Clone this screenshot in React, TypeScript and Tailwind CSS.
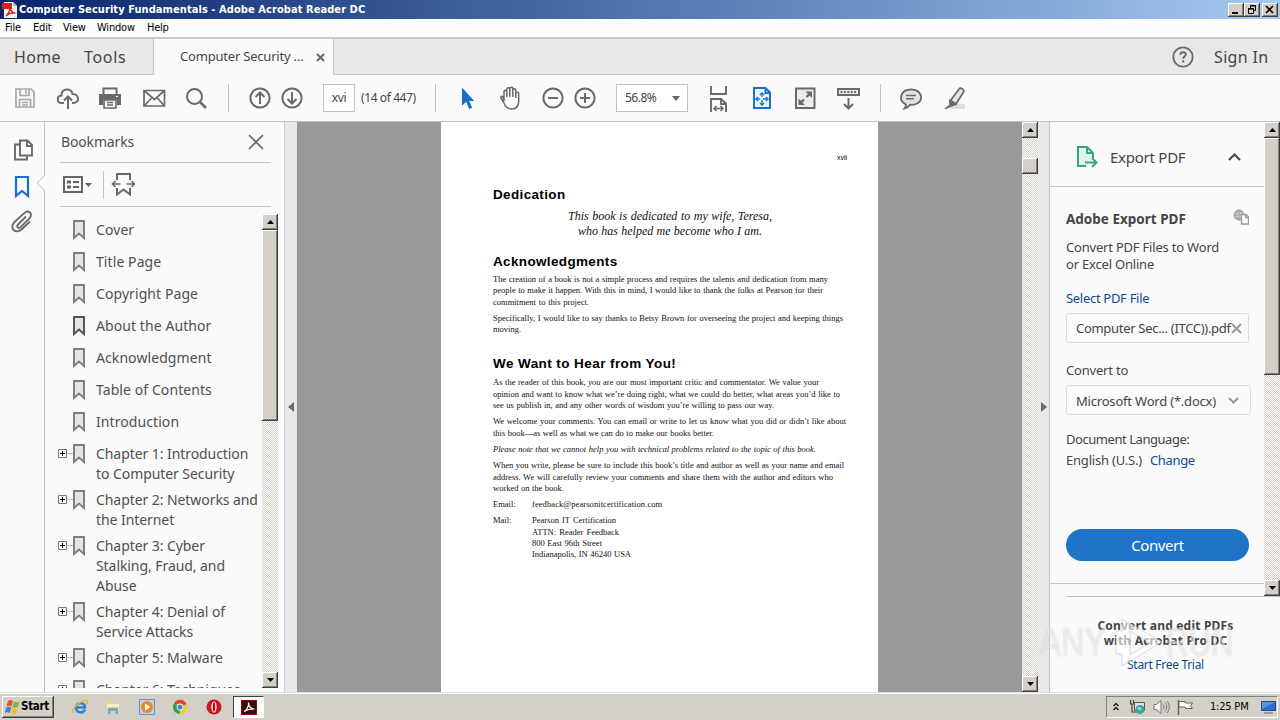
import type { ReactNode } from "react";

const bookmarks = [
  { lines: ["Cover"] },
  { lines: ["Title Page"] },
  { lines: ["Copyright Page"] },
  { lines: ["About the Author"], current: true },
  { lines: ["Acknowledgment"] },
  { lines: ["Table of Contents"] },
  { lines: ["Introduction"] },
  { lines: ["Chapter 1: Introduction", "to Computer Security"], expandable: true },
  { lines: ["Chapter 2: Networks and", "the Internet"], expandable: true },
  { lines: ["Chapter 3: Cyber", "Stalking, Fraud, and", "Abuse"], expandable: true },
  { lines: ["Chapter 4: Denial of", "Service Attacks"], expandable: true },
  { lines: ["Chapter 5: Malware"], expandable: true },
  { lines: ["Chapter 6: Techniques"], expandable: true },
];

const Icon = ({ className = "", children }: { className?: string; children: ReactNode }) => (
  <svg viewBox="0 0 24 24" className={`h-6 w-6 shrink-0 ${className}`} fill="none" stroke="#6a6a6a" strokeWidth="2">
    {children}
  </svg>
);

const Separator = ({ className = "" }: { className?: string }) => (
  <div className={`h-7 w-px shrink-0 bg-[#c4c4c4] ${className}`} />
);

const bevel =
  "bg-[#d4d0c8] shadow-[inset_-1px_-1px_#404040,inset_1px_1px_#ffffff,inset_-2px_-2px_#808080]";

const ScrollButton = ({ down = false }: { down?: boolean }) => (
  <div className={`flex h-4 w-4 shrink-0 items-center justify-center ${bevel}`}>
    <svg width="7" height="4" viewBox="0 0 7 4">
      <path d={down ? "M0 0h7L3.5 4z" : "M0 4h7L3.5 0z"} fill="#000" />
    </svg>
  </div>
);

const ScrollBar = ({ thumb }: { thumb: string }) => (
  <div className="flex w-4 shrink-0 flex-col bg-[repeating-conic-gradient(#d4d0c8_0_25%,#ffffff_0_50%)] bg-[length:2px_2px]">
    <ScrollButton />
    <div className={`w-4 ${bevel} ${thumb}`} />
    <div className="flex-1" />
    <ScrollButton down />
  </div>
);

const TitleBar = () => (
  <div className="flex h-[19px] items-center bg-gradient-to-r from-[#0a246a] to-[#a6caf0] pl-[2px] pr-[2px]">
    <svg width="16" height="16" viewBox="0 0 16 16">
      <path d="M2 0h9l4 4v12H2z" fill="#f4f4f4" />
      <path d="M11 0v4h4z" fill="#bbb" />
      <path d="M0 1h10v6H0z" fill="#d3221c" />
      <path d="M4 14c3-3 4-7 3.500-9 1 4 3 6 6 6-4-.5-7 .5-9.500 3z" fill="none" stroke="#d3221c" strokeWidth="1.300" />
    </svg>
    <span className="ml-[1px] whitespace-nowrap font-['DejaVu_Sans_Condensed','DejaVu_Sans',sans-serif] text-[11px] font-bold leading-[18px] tracking-[0.07px] text-white">
      Computer Security Fundamentals - Adobe Acrobat Reader DC
    </span>
    <div className="ml-auto flex">
      <div className={`flex h-[14px] w-4 items-center justify-center ${bevel}`}>
        <svg width="10" height="10" viewBox="0 0 10 10"><path d="M1 7h6v2H1z" /></svg>
      </div>
      <div className={`flex h-[14px] w-4 items-center justify-center ${bevel}`}>
        <svg width="10" height="10" viewBox="0 0 10 10" fill="none" stroke="#000">
          <path d="M3.500 3V.5h5v5H7M3 1h6M1.500 3.500h5v5h-5zM1 4h6" />
        </svg>
      </div>
      <div className={`ml-[2px] flex h-[14px] w-4 items-center justify-center ${bevel}`}>
        <svg width="10" height="10" viewBox="0 0 10 10"><path d="M1 1l7 7M8 1L1 8" stroke="#000" strokeWidth="1.600" /></svg>
      </div>
    </div>
  </div>
);

const MenuBar = () => (
  <div className="flex h-[18px] items-center bg-[#fcfcfc] pl-[5px] pt-px font-['DejaVu_Sans_Condensed','DejaVu_Sans',sans-serif] text-[11px] text-black">
    <span className="w-7 tracking-[-0.1px]">File</span>
    <span className="w-[30px] tracking-[-0.2px]">Edit</span>
    <span className="w-[34px] tracking-[-0.2px]">View</span>
    <span className="w-[50px] tracking-[-0.2px]">Window</span>
    <span className="tracking-[-0.3px]">Help</span>
  </div>
);

const TabBar = () => (
  <div className="flex h-[38px] border-t-2 border-[#cbcbcb] bg-[#e8e8e8] text-[#454545]">
    <div className="flex w-[154px] items-center border-b border-r border-[#c6c6c6] pl-[14px] text-[16px]">
      <span className="w-[70px] tracking-[0.3px]">Home</span>
      <span className="tracking-[0.7px]">Tools</span>
    </div>
    <div className="flex w-[179px] items-center bg-[#fafafa] pl-[26px]">
      <span className="w-[136px] whitespace-nowrap text-[13px] tracking-[-0.2px]">Computer Security ...</span>
      <svg width="9" height="9" viewBox="0 0 9 9"><path d="M1 1l7 7M8 1L1 8" stroke="#666" strokeWidth="2" /></svg>
    </div>
    <div className="flex flex-1 items-center border-b border-l border-[#c6c6c6]">
      <Icon className="ml-[837px]">
        <circle cx="12" cy="12" r="9.700" strokeWidth="1.800" />
        <path d="M9.300 9.700c0-3.500 5.700-3.300 5.500-.2-.1 1.900-2.600 1.900-2.600 4.200M12.200 15.200v2.200" />
      </Icon>
      <span className="ml-[19px] whitespace-nowrap text-[16px] tracking-[0.35px]">Sign In</span>
    </div>
  </div>
);

const Toolbar = () => (
  <div className="flex h-[47px] items-center border-b border-[#c4c4c4] bg-[#fafafa] text-[#454545]">
    <Icon className="ml-[13px]">
      <g stroke="#a9a9a9" strokeWidth="1.700">
        <path d="M3 3h15l3 3v15H3zM7 3v6.500h9V3M13 4v4M6.500 21v-7.500h11V21M9 16.500h6M9 19h6" />
      </g>
    </Icon>
    <Icon className="ml-[19px]">
      <path d="M8 17H6c-5.500 0-5.500-7-.5-7.500C5 2 15.500 1.500 16.500 8c7 0 7.500 9 .5 9h-1" />
      <path d="M12 23V11M8 14.500l4-4 4 4" />
    </Icon>
    <Icon className="ml-[18px]">
      <path d="M5.500 8V2.500h13V8" />
      <path d="M1 8h22v11h-4v-5H5v5H1z" fill="#6a6a6a" stroke="none" />
      <path d="M6 14h12v8H6zM9 16.500h6M9 19h6" strokeWidth="1.600" />
      <path d="M18 10.500h2" stroke="#fff" strokeWidth="1.200" />
    </Icon>
    <Icon className="ml-[20px]">
      <path d="M2 4.500h20.500v15.500H2zM2.500 5l10 8.500L22 5M2.500 19.500l7.500-8M22 19.500l-7-8" strokeWidth="1.700" />
    </Icon>
    <Icon className="ml-[18px]">
      <circle cx="10.500" cy="10.500" r="7.500" />
      <path d="M16 16l6 6" strokeWidth="2.600" />
    </Icon>
    <Separator className="ml-[20px]" />
    <Icon className="ml-[19px]">
      <circle cx="12" cy="12" r="9.600" />
      <path d="M12 18V7M7.500 11L12 6.500l4.500 4.500" />
    </Icon>
    <Icon className="ml-[8px]">
      <circle cx="12" cy="12" r="9.600" />
      <path d="M12 6v11M7.500 13l4.500 4.500 4.500-4.500" />
    </Icon>
    <div className="ml-[19px] flex h-7 w-8 shrink-0 items-center justify-center border border-[#c4c4c4] bg-white text-[12px] tracking-[-0.4px]">xvi</div>
    <span className="ml-[6px] w-[61px] shrink-0 whitespace-nowrap text-[12px] tracking-[-0.4px]">(14 of 447)</span>
    <Separator className="ml-[13px]" />
    <Icon className="ml-[20px]">
      <path d="M6 1.500v18l4.200-3.500 3 7 3-1.300-3-6.700h5z" fill="#1a6fc9" stroke="none" />
    </Icon>
    <Icon className="ml-[18px]">
      <path
        d="M6 15V5.800c0-2 2.800-2 2.800 0V11 3.500c0-2.200 3-2.200 3 0V11 3c0-2.200 3-2.200 3 0v8V4.500c0-2.200 3-2.200 3 0V12 8c0-2.200 2.900-2.200 2.900 0v7c0 5-2.500 8-7 8-5 0-6.500-3-8-6.500L3.200 12.500C2 10.300 4 9.500 5 11z"
        strokeWidth="1.500"
      />
    </Icon>
    <Icon className="ml-[19px]">
      <circle cx="12" cy="12" r="9.600" />
      <path d="M7 12h10" />
    </Icon>
    <Icon className="ml-[8px]">
      <circle cx="12" cy="12" r="9.600" />
      <path d="M7 12h10M12 7v10" />
    </Icon>
    <div className="ml-[19px] flex h-7 w-[72px] shrink-0 items-center border border-[#c4c4c4] bg-white pl-[8px] text-[12px]">
      <span className="w-[47px] tracking-[-0.5px]">56.8%</span>
      <svg width="8" height="5" viewBox="0 0 8 5"><path d="M0 0h8L4 5z" fill="#666" /></svg>
    </div>
    <Icon className="ml-[18px] overflow-visible">
      <path d="M5 0v8h15V0M5 26V13h10l5 4.500V26M15 13v5h5" strokeWidth="1.900" />
      <path d="M8 22.500h9M10.500 20L8 22.500l2.500 2.500M14.500 20l2.500 2.500-2.500 2.500" strokeWidth="1.500" />
    </Icon>
    <Icon className="ml-[20px]">
      <g stroke="#1a6fc9">
        <path d="M4 2h11.500L20 6.500V22H4zM15.500 2v5H20" fill="#eaf3fb" />
        <path d="M12 7v12M6 13h12" strokeWidth="1.300" strokeDasharray="4 3" />
        <path d="M10 9l2-2 2 2M10 17l2 2 2-2M8 11l-2 2 2 2M16 11l2 2-2 2" strokeWidth="1.400" />
      </g>
    </Icon>
    <Icon className="ml-[19px]">
      <path d="M3 2.500h18.500V22H3z" fill="#ededed" />
      <path d="M12.500 5.500h6.500v6.500zM5.500 12.500v6.500h6.500z" fill="#6a6a6a" stroke="none" />
      <path d="M17 7.500L13.500 11M11 13.500L7.500 17" strokeWidth="2.400" />
    </Icon>
    <Icon className="ml-[19px]">
      <path d="M2 3h21v6H2z" fill="#ededed" />
      <path d="M4.500 6h16" strokeDasharray="2 1.400" />
      <path d="M12.500 12v10M8 18l4.500 4.500L17 18" />
    </Icon>
    <Separator className="ml-[20px]" />
    <Icon className="ml-[18px]">
      <path d="M7 18.500C-2 14 2 3.500 12 3.500s14 10 5 14.500c-2 1-4 .9-6 .7-1.500 2.300-3 3.300-5.500 3.800 1-1.300 1.500-2.300 1.500-4z" fill="#e4e4e4" strokeWidth="1.800" />
      <path d="M7 9.500h10M7 12.800h8" strokeWidth="1.500" />
    </Icon>
    <Icon className="ml-[19px]">
      <path d="M11 18h12v5H8z" fill="#dedede" stroke="none" />
      <path d="M17.500 2.500c1-1 5 1.500 4.300 3.200L14 18l-5.500-3.500z" fill="#e4e4e4" strokeWidth="1.800" />
      <path d="M8 15l5 3.500-4.500 1.500z" fill="#6a6a6a" />
      <path d="M7 19l2 2-4.500 2H2z" fill="#6a6a6a" stroke="none" />
    </Icon>
  </div>
);

const SideStrip = () => (
  <div className="flex w-[45px] shrink-0 flex-col border-r border-[#c4c4c4] bg-[#fafafa]">
    <Icon className="ml-[12px] mt-[16px]">
      <path d="M8 2.500h7.500L20 7v10.500H8zM15 2.500V8h5M8 6.500H3v15h12V18" strokeWidth="1.900" />
    </Icon>
    <div className="mt-[13px] flex">
      <Icon className="ml-[10px]">
        <path d="M6 2h12v19l-6-5-6 5z" stroke="#1a6fc9" strokeWidth="2.200" />
      </Icon>
      {/* notch that points at the open panel */}
      <svg width="9" height="16" viewBox="0 0 9 16" className="relative left-[2px] top-[0px]">
        <path d="M9 0v16L1 8z" fill="#fafafa" />
        <path d="M9 0L1 8l8 8" fill="none" stroke="#c4c4c4" />
      </svg>
    </div>
    <Icon className="ml-[10px] mt-[11px]">
      <path d="M16 6.500l-8 8c-2 2.200.6 4.500 2.600 2.600l9-9c4-4.500-1.500-8.500-5.300-5L4.500 12c-6 6.500 1.500 12.500 7 7.500l8.500-8" strokeWidth="1.900" />
    </Icon>
  </div>
);

type BookmarkProps = { lines: string[]; current?: boolean; expandable?: boolean };

const BookmarkRow = ({ lines, current, expandable }: BookmarkProps) => (
  <div className="flex min-h-8 pb-[6px] pl-[13px]">
    <div className="flex w-[15px] shrink-0 items-start pt-[5px]">
      {expandable && (
        <svg width="16" height="9" viewBox="0 0 16 9" className="shrink-0">
          <path d="M.5.5h8v8h-8z" fill="#fff" stroke="#777" />
          <path d="M2 4.500h5M4.500 2v5" stroke="#000" />
          <path d="M9 4.500h6" stroke="#bbb" />
        </svg>
      )}
    </div>
    <svg width="12" height="20" viewBox="0 0 12 20" className="shrink-0">
      <path d="M1 1h10v17l-5-4.500L1 18z" fill="#e4e4e4" stroke={current ? "#555" : "#808080"} strokeWidth="2" />
    </svg>
    <div
      className={`ml-[11px] whitespace-nowrap text-[14px] leading-5 ${expandable ? "tracking-[-0.07px]" : "tracking-[0.08px]"}`}
    >
      {lines.map((line) => (
        <div key={line}>{line}</div>
      ))}
    </div>
  </div>
);

const BookmarksPanel = () => (
  <div className="flex w-[239px] shrink-0 flex-col bg-[#fafafa] text-[#4f4f4f]">
    <div className="ml-[15px] mr-[13px] flex h-[41px] shrink-0 items-center justify-between border-b border-[#c4c4c4] pb-px pr-[7px]">
      <span className="ml-px text-[14px] tracking-[-0.15px]">Bookmarks</span>
      <svg width="16" height="16" viewBox="0 0 16 16"><path d="M1 1l14 14M15 1L1 15" stroke="#666" strokeWidth="1.700" /></svg>
    </div>
    <div className="ml-[15px] mr-[13px] flex h-[44px] shrink-0 items-center border-b border-[#c4c4c4]">
      <svg width="32" height="18" viewBox="0 0 32 18" fill="none" stroke="#666" strokeWidth="2" className="ml-[3px]">
        <path d="M1 1h18v15H1z" />
        <path d="M4 6h4M4 11h4" strokeWidth="3" />
        <path d="M10 6h6M10 11h6" />
        <path d="M22 7h7l-3.500 4z" fill="#666" stroke="none" />
      </svg>
      <Separator className="ml-[8px]" />
      <Icon className="mb-[2px] ml-[7px]">
        <path d="M6 8V2h13v6M6 16v6.500l6.500-5 6.500 5V16" />
        <path d="M1.500 12h8M15.500 12h8M4.500 9l-3 3 3 3M20.500 9l3 3-3 3" strokeWidth="1.700" />
      </Icon>
    </div>
    <div className="mt-[7px] flex h-[474px] shrink-0">
      <div className="w-[217px] overflow-hidden pt-[6px]">
        {bookmarks.map((b) => (
          <BookmarkRow key={b.lines[0]} {...b} />
        ))}
      </div>
      <ScrollBar thumb="h-[191px]" />
    </div>
  </div>
);

const Line = ({ className, children }: { className: string; children: ReactNode }) => (
  <div className={`whitespace-nowrap [text-align-last:justify] ${className}`}>{children}</div>
);

const DocumentPage = () => (
  <div className="ml-[144px] h-full w-[437px] shrink-0 bg-white pl-[52px] font-['Liberation_Serif',serif] text-[8.5px] leading-[11.3px] text-[#111]">
    <div className="pl-[344px] pt-[31px] font-['Liberation_Sans',sans-serif] text-[7px] leading-[10px] text-black">xvii</div>
    <h2 className="mt-[23px] font-['Liberation_Sans',sans-serif] text-[13.5px] font-bold leading-[18px] tracking-[0.35px] text-black">Dedication</h2>
    <div className="mt-[5px] text-[12px] italic leading-[15px]">
      <Line className="ml-[75px] w-[204px]">This book is dedicated to my wife, Teresa,</Line>
      <Line className="ml-[85px] w-[184px]">who has helped me become who I am.</Line>
    </div>
    <h2 className="mt-[14px] font-['Liberation_Sans',sans-serif] text-[13.5px] font-bold leading-[18px] tracking-[0.35px] text-black">Acknowledgments</h2>
    <div className="mt-[3px]">
      <Line className="w-[335px]">The creation of a book is not a simple process and requires the talents and dedication from many</Line>
      <Line className="w-[330px]">people to make it happen. With this in mind, I would like to thank the folks at Pearson for their</Line>
      <Line className="w-[96px]">commitment to this project.</Line>
    </div>
    <div className="mt-[5px]">
      <Line className="w-[350px]">Specifically, I would like to say thanks to Betsy Brown for overseeing the project and keeping things</Line>
      <Line className="w-[30px]">moving.</Line>
    </div>
    <h2 className="mt-[20px] font-['Liberation_Sans',sans-serif] text-[13.5px] font-bold leading-[18px] tracking-[0.42px] text-black">We Want to Hear from You!</h2>
    <div className="mt-[4px]">
      <Line className="w-[326px]">As the reader of this book, <i>you</i> are our most important critic and commentator. We value your</Line>
      <Line className="w-[347px]">opinion and want to know what we’re doing right, what we could do better, what areas you’d like to</Line>
      <Line className="w-[281px]">see us publish in, and any other words of wisdom you’re willing to pass our way.</Line>
    </div>
    <div className="mt-[5px]">
      <Line className="w-[353px]">We welcome your comments. You can email or write to let us know what you did or didn’t like about</Line>
      <Line className="w-[221px]">this book—as well as what we can do to make our books better.</Line>
    </div>
    <div className="mt-[5px] italic">
      <Line className="w-[323px]">Please note that we cannot help you with technical problems related to the topic of this book.</Line>
    </div>
    <div className="mt-[5px]">
      <Line className="w-[351px]">When you write, please be sure to include this book’s title and author as well as your name and email</Line>
      <Line className="w-[340px]">address. We will carefully review your comments and share them with the author and editors who</Line>
      <Line className="w-[71px]">worked on the book.</Line>
    </div>
    <div className="mt-[5px] flex">
      <span className="w-[39px]">Email:</span>
      <span className="tracking-[0.08px]">feedback@pearsonitcertification.com</span>
    </div>
    <div className="mt-[5px] flex">
      <span className="w-[39px]">Mail:</span>
      <div>
        <Line className="w-[84px]">Pearson IT Certification</Line>
        <Line className="w-[87px]">ATTN: Reader Feedback</Line>
        <Line className="w-[70px]">800 East 96th Street</Line>
        <Line className="w-[99px]">Indianapolis, IN 46240 USA</Line>
      </div>
    </div>
  </div>
);

const ExportPanel = () => (
  <div className="flex w-[231px] shrink-0 flex-col border-l border-[#c4c4c4] bg-[#fafafa] text-[#454545]">
    <div className="flex h-[474px] shrink-0">
      <div className="flex w-[214px] flex-col">
        <div className="flex h-[65px] shrink-0 items-center border-b border-[#c9c9c9] pt-[6px]">
          <svg width="22" height="24" viewBox="0 0 22 24" className="ml-[26px]" fill="none" stroke="#37a583" strokeWidth="2">
            <path d="M10 21H2V2h9l6 6v5M11 2v6h6" fill="#e2f2ee" />
            <path d="M9 17.500h11M16 13l4.500 4.500L16 22" fill="none" />
          </svg>
          <span className="ml-[12px] w-[118px] whitespace-nowrap text-[15px] tracking-[-0.25px]">Export PDF</span>
          <svg width="13" height="8" viewBox="0 0 13 8" fill="none" stroke="#4b4b4b" strokeWidth="2.200"><path d="M1 7l5.500-5.500L12 7" /></svg>
        </div>
        <div className="flex flex-col pl-4 text-[13px] leading-[18px] tracking-[-0.2px]">
          <div className="mt-[21px] flex h-[22px] items-center">
            <span className="w-[167px] whitespace-nowrap text-[13.5px] font-bold tracking-normal">Adobe Export PDF</span>
            <svg width="16" height="18" viewBox="0 0 16 18" fill="none" stroke="#999" className="mb-1">
              <circle cx="6" cy="7" r="5" fill="#d6d6d6" />
              <path d="M1 7h10M6 2v10M2 4h8M2 10h8M6 2c-4 3-4 7 0 10M6 2c4 3 4 7 0 10" strokeWidth=".8" />
              <path d="M8.500 6.500h4.500l2.500 2.500v7h-7zM12.500 6.500V9.500h3" fill="#fafafa" strokeWidth="1.300" />
            </svg>
          </div>
          <div className="mt-[9px] whitespace-nowrap leading-[17px]">
            <div>Convert PDF Files to Word</div>
            <div>or Excel Online</div>
          </div>
          <div className="mt-[16px] tracking-[-0.3px] text-[#0b4c94]">Select PDF File</div>
          <div className="mt-[6px] flex h-[30px] w-[183px] items-center rounded-[3px] border border-[#dcdcdc] pl-[9px]">
            <span className="w-[155px] shrink-0 whitespace-nowrap tracking-[-0.3px]">Computer Sec... (ITCC)).pdf</span>
            <svg width="11" height="11" viewBox="0 0 11 11" className="shrink-0"><path d="M1 1l9 9M10 1l-9 9" stroke="#999" strokeWidth="1.900" /></svg>
          </div>
          <div className="mt-[18px]">Convert to</div>
          <div className="mt-[6px] flex h-[30px] w-[185px] items-center rounded-[3px] border border-[#dcdcdc] pl-[9px]">
            <span className="w-[152px] whitespace-nowrap pt-px">Microsoft Word (*.docx)</span>
            <svg width="11" height="7" viewBox="0 0 11 7"><path d="M1 1l4.500 4.500L10 1" fill="none" stroke="#999" strokeWidth="2" /></svg>
          </div>
          <div className="mt-[14px] leading-[21px]">
            <div className="tracking-[-0.45px]">Document Language:</div>
            <div>
              English (U.S.)<span className="ml-[8px] tracking-[-0.35px] text-[#0b4c94]">Change</span>
            </div>
          </div>
          <div className="mt-[58px] flex h-8 w-[183px] items-center justify-center rounded-full bg-[#2074c8] text-[15px] tracking-[-0.4px] text-white">
            Convert
          </div>
        </div>
        <div className="mt-[22px] border-t border-[#c9c9c9]" />
      </div>
      <ScrollBar thumb="h-[237px]" />
    </div>
    <div className="relative ml-4 flex-1 border-t border-[#c4c4c4] pr-[15px] text-center">
      <div className="mt-[21px] whitespace-nowrap text-[12px] font-bold leading-[15px] tracking-[0.2px]">
        <div>Convert and edit PDFs</div>
        <div>with Acrobat Pro DC</div>
      </div>
      <div className="mt-[9px] text-[12px] leading-[16px] tracking-[-0.3px] text-[#0b4c94]">Start Free Trial</div>
      <div className="absolute -left-[26px] top-[14px] flex items-center whitespace-nowrap font-['Liberation_Sans',sans-serif] text-[40px] leading-[62px] text-white/50 [text-shadow:0_0_2px_rgba(120,120,120,0.3)]">
        <span className="w-[78px] origin-left scale-x-[0.8]">ANY</span>
        <svg width="56" height="62" viewBox="0 0 56 62" className="-ml-[8px] shrink-0" fill="#ffffff99" stroke="#bbbbbb88">
          <path d="M12 8l40 23-40 24V43h-6V20h6zM20 20v24l20-12z" fillRule="evenodd" />
        </svg>
        <span className="origin-left scale-x-[0.78]">RUN</span>
      </div>
    </div>
  </div>
);

const Taskbar = () => (
  <div className="flex h-7 items-center border-t border-[#e4e1da] bg-[#d4d0c8] pt-px shadow-[inset_0_1px_#ffffff]">
    <div className={`ml-[2px] flex h-[22px] w-[52px] items-center pl-[3px] ${bevel}`}>
      <svg width="16" height="16" viewBox="0 0 16 16">
        <path d="M3 2c2-1.500 3.500-1 5 0L6.500 7.500C5 6.500 3.500 6.500 1.500 7.500z" fill="#e8532b" />
        <path d="M9 2.500c2 1 3.500 1 5.500 0L13 8c-2 1-3.500.8-5.500 0z" fill="#79b83a" />
        <path d="M1.200 8.500c2-1 3.500-.8 5 0L4.700 14c-1.500-1-3-1-5 0z" fill="#3f83d0" />
        <path d="M7.300 9c2 1 3.500 1 5.500 0l-1.500 5.500c-2 1-3.500.8-5.500 0z" fill="#f4bf2b" />
      </svg>
      <span className="font-['DejaVu_Sans_Condensed','DejaVu_Sans',sans-serif] text-[11.5px] font-bold tracking-[-0.3px] text-black">Start</span>
    </div>
    <svg width="16" height="16" viewBox="0 0 16 16" className="ml-[18px]" fill="none">
      <path d="M13 10.500c-2.500 4.500-9 3.500-9-2s8.500-6 9 0H5" stroke="#2a86d6" strokeWidth="2.600" />
      <path d="M1 14C-.5 10 8 1 14.500 1.500c1.500.5.500 3-.5 4.500" stroke="#e9b53a" strokeWidth="1.500" />
    </svg>
    <svg width="16" height="16" viewBox="0 0 16 16" className="ml-[17px]">
      <path d="M1 2h5l1 2h7v10H1z" fill="#efd77f" />
      <path d="M2 5h12v3H2z" fill="#fbf1bd" />
      <path d="M3 15V9h10v6h-2.500v-3h-5v3z" fill="#62aede" />
    </svg>
    <svg width="16" height="16" viewBox="0 0 16 16" className="ml-[18px]">
      <path d="M.5.500h15v15H.5z" fill="#b6d5ef" stroke="#6295c4" />
      <circle cx="8" cy="8" r="6" fill="#f08a1c" />
      <path d="M6 4.500v7L11.500 8z" fill="#fff" />
    </svg>
    <svg width="16" height="16" viewBox="0 0 16 16" className="ml-[17px]">
      <circle cx="8" cy="8" r="7" fill="#f6c928" />
      <path d="M8 8L2 4.300A7 7 0 0114.500 5z" fill="#dd4434" />
      <path d="M8 8L2 4.300A7 7 0 007.500 15z" fill="#2c9f52" />
      <circle cx="8" cy="8" r="3.400" fill="#fff" />
      <circle cx="8" cy="8" r="2.600" fill="#4285d4" />
    </svg>
    <svg width="16" height="16" viewBox="0 0 16 16" className="ml-[18px]">
      <ellipse cx="8" cy="8" rx="7.500" ry="7.500" fill="#c91820" />
      <ellipse cx="8" cy="8" rx="2.600" ry="5.500" fill="#fff" />
      <ellipse cx="8" cy="8" rx="1.300" ry="4.700" fill="#a31219" />
    </svg>
    <div className="ml-[11px] flex h-[22px] w-[31px] items-center justify-center border border-[#404040] border-b-white border-r-white bg-[#fafafa]">
      <svg width="16" height="15" viewBox="0 0 16 15">
        <path d="M0 0h16v15H0z" fill="#7c1012" />
        <path d="M1 1h14v13H1z" fill="#3a0d0f" />
        <path d="M3 11.500c3-1.500 5-5.500 4.500-9 .3 4 2.500 6.500 6 6.500-4-.3-7 .5-10.500 2.500z" fill="none" stroke="#fff" strokeWidth="1.200" />
      </svg>
    </div>
    <div className="ml-auto mr-[2px] flex h-[22px] w-[172px] items-center border border-[#808080] border-b-white border-r-white">
      <svg width="6" height="9" viewBox="0 0 6 9" className="mb-[2px] ml-[6px]" fill="none" stroke="#000" strokeWidth="1.200">
        <path d="M.5 4L3 1.500 5.500 4M.5 8L3 5.500 5.500 8" />
      </svg>
      <svg width="17" height="16" viewBox="0 0 17 16" className="ml-[10px]">
        <path d="M5.500 3.500h10v8h-10z" fill="#d8e4e8" stroke="#555" />
        <path d="M1.500 1v4h3V1M3 5v8h5" fill="none" stroke="#444" strokeWidth="1.200" />
        <circle cx="11" cy="10.500" r="4.500" fill="#3ba79a" />
        <path d="M8 9c2-2 4-1 5 1-2 2-3 2-5-1z" fill="#9bd8d0" />
      </svg>
      <svg width="17" height="16" viewBox="0 0 17 16" className="ml-[7px]" fill="none" stroke="#777">
        <path d="M1 5.500h2.500L8 1.500v13l-4.500-4H1z" fill="#f3f3f3" />
        <path d="M10 5.500c1.300 1.500 1.300 3.500 0 5M12 3.500c2.300 2.500 2.300 6.500 0 9M14 2c3 3.500 3 8.500 0 12" />
      </svg>
      <svg width="17" height="16" viewBox="0 0 17 16" className="ml-[7px]" fill="none" stroke="#666">
        <path d="M1.500 1v15" strokeWidth="1.500" />
        <path d="M2 2.500h6V4h7.500l-2 3 2 2.500H8.500V8H2z" fill="#fff" />
      </svg>
      <span className="ml-[16px] w-[51px] whitespace-nowrap font-['DejaVu_Sans_Condensed','DejaVu_Sans',sans-serif] text-[11px] tracking-[-0.2px] text-black">1:25 PM</span>
      <svg width="15" height="13" viewBox="0 0 15 13" className="-mr-px shrink-0">
        <path d="M.5.500h14v9H.5z" fill="#2c6fd0" stroke="#23487c" />
        <path d="M1 1h13L1 8z" fill="#5796e4" />
        <path d="M3 12h9" stroke="#888" strokeWidth="1.500" />
      </svg>
    </div>
  </div>
);

export default function App() {
  return (
    <div className="flex h-[720px] w-[1280px] flex-col overflow-hidden bg-[#fafafa] font-['Noto_Sans',sans-serif]">
      <TitleBar />
      <MenuBar />
      <TabBar />
      <Toolbar />
      <div className="flex h-[570px] shrink-0 overflow-hidden">
        <SideStrip />
        <BookmarksPanel />
        <div className="flex w-[13px] shrink-0 items-center justify-center border-l border-[#cfcfcf] bg-[#e8e8e8]">
          <svg width="6" height="10" viewBox="0 0 6 10"><path d="M6 0v10L0 5z" fill="#6a6a6a" /></svg>
        </div>
        <div className="flex w-[725px] shrink-0 bg-[#999999]">
          <DocumentPage />
        </div>
        <ScrollBar thumb="mt-5 h-4" />
        <div className="flex w-[11px] shrink-0 items-center justify-center bg-[#e8e8e8]">
          <svg width="6" height="10" viewBox="0 0 6 10"><path d="M0 0v10l6-5z" fill="#6a6a6a" /></svg>
        </div>
        <ExportPanel />
      </div>
      <Taskbar />
    </div>
  );
}
